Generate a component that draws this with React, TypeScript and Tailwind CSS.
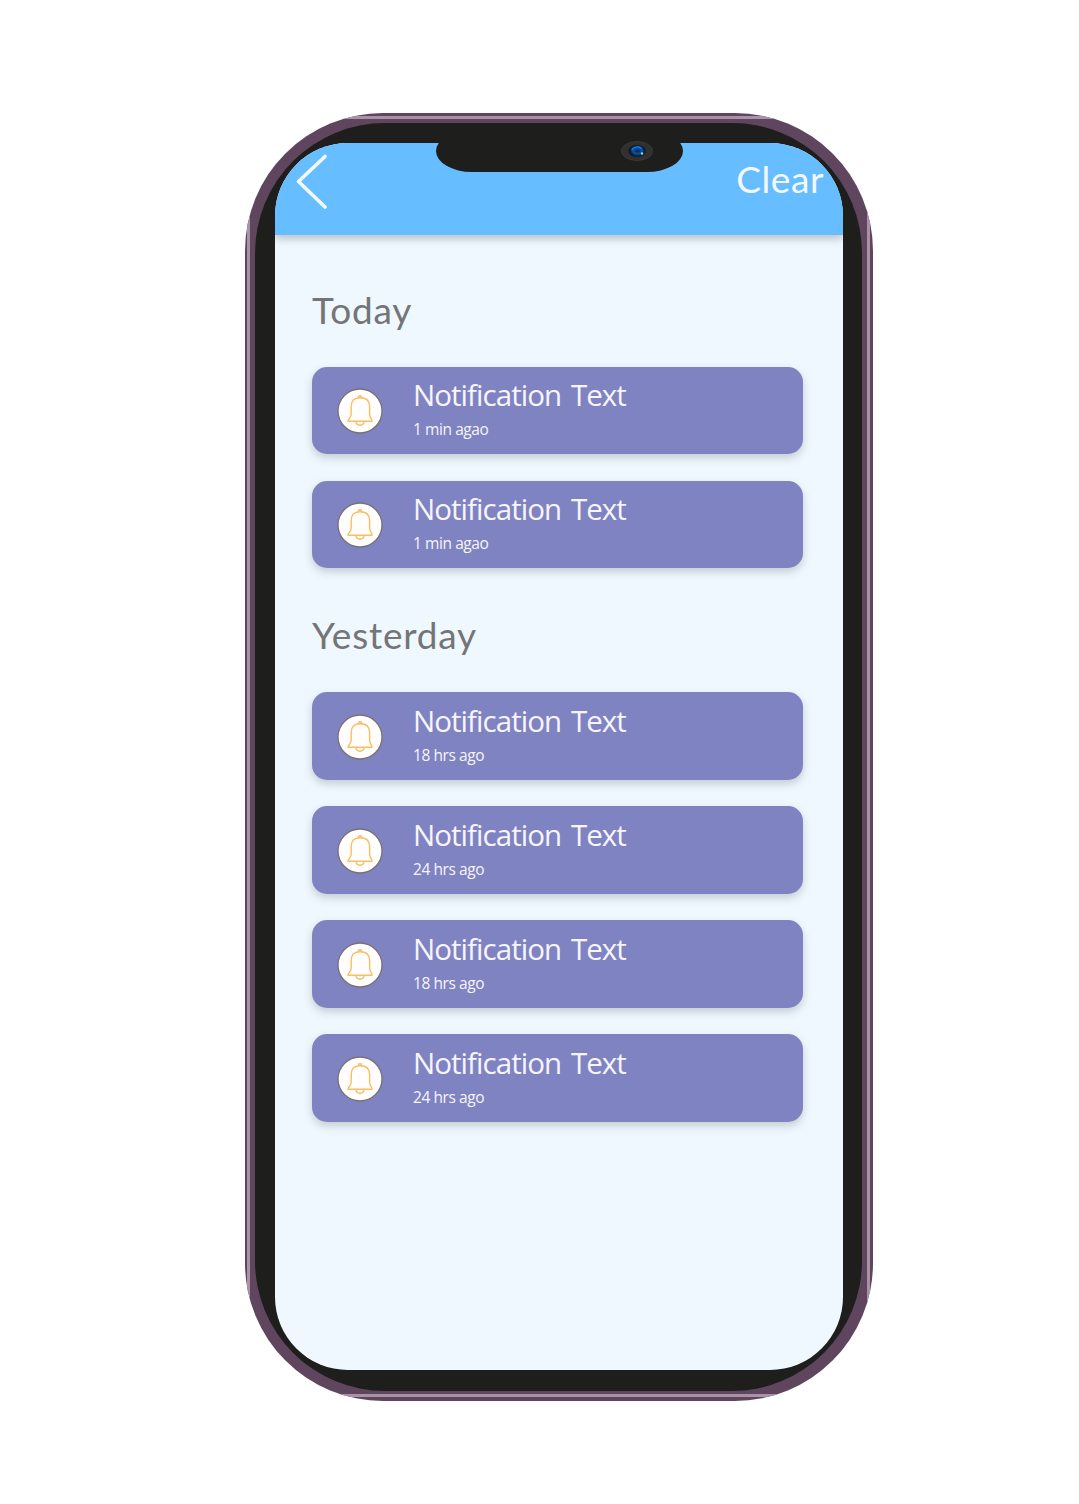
import React from "react";

const today = ["1 min agao", "1 min agao"];
const yesterday = ["18 hrs ago", "24 hrs ago", "18 hrs ago", "24 hrs ago"];

function Bell() {
  return (
    <svg className="mt-[2px] size-[46px] shrink-0" viewBox="0 0 46 46" fill="none">
      <circle cx="23" cy="23" r="22" fill="#fffefc" stroke="#77717b" strokeWidth="1.3" />
      <g stroke="#f9bd62" strokeWidth="1.4" strokeLinejoin="round" strokeLinecap="round">
        <path d="M11 33.2H35C35 30.6 32.6 30 32.6 26V18.5C32.6 13 29 9.8 23 9.8C17 9.8 14.2 13 14.2 18.5V26C14.2 30 11 30.6 11 33.2Z" />
        <path d="M21.3 9.3C21.3 7.2 24.7 7.2 24.7 9.3" />
        <path d="M18.8 33.5C19.4 38.4 26.6 38.4 27.2 33.5" />
      </g>
    </svg>
  );
}

function Card({ time }: { time: string }) {
  return (
    <article className="flex h-[87.5px] w-[491px] items-center rounded-[15px] bg-[#8083c1] pl-[25px] text-[#f6f5fb] shadow-[0_4px_8px_rgba(70,80,90,0.26)]">
      <Bell />
      <div className="-mt-[4px] ml-[30px] flex flex-col whitespace-nowrap font-['Open_Sans','Noto_Sans',sans-serif]">
        <h3 className="text-[29.5px] leading-[38px] tracking-[-0.95px] [word-spacing:3px]">Notification Text</h3>
        <p className="mt-[3px] text-[15.5px] leading-[24px] tracking-[-0.42px]">{time}</p>
      </div>
    </article>
  );
}

function Section({ title, items }: { title: string; items: string[] }) {
  return (
    <section>
      <h2 className="mb-[33px] h-[48px] font-['Lato',sans-serif] text-[37px] leading-[47px] tracking-[0.8px] text-[#747577]">{title}</h2>
      <div className="flex flex-col gap-[26.5px]">
        {items.map((time, i) => (
          <Card key={i} time={time} />
        ))}
      </div>
    </section>
  );
}

export default function App() {
  return (
    <main className="h-[1504px] w-[1079px] overflow-hidden bg-white pl-[244.5px] pt-[113px]">
      <div className="relative h-[1287.5px] w-[628.5px] overflow-hidden rounded-[138px] bg-[#5f465e] px-[10.5px] py-[10px]">
        <div className="absolute inset-x-0 top-[3px] h-[3px] bg-[#a793a5]" />
        <div className="absolute inset-x-0 bottom-[3.5px] h-[3px] bg-[#a793a5]" />
        <div className="absolute inset-y-0 left-[2.5px] w-[3px] bg-[#a793a5]" />
        <div className="absolute inset-y-0 right-[3px] w-[3px] bg-[#a793a5]" />
        <div className="relative h-[1267.5px] w-[607px] rounded-[130px] bg-[#1e1e1c] px-[20px] pt-[20px]">
          <div className="h-[1227px] w-[568px] overflow-hidden rounded-[73px] bg-[#f0f8ff]">
            <header className="flex h-[92px] items-start justify-between bg-[#66bdff] pl-[21px] pr-[19px] pt-[11px] shadow-[0_4px_8px_rgba(70,80,90,0.32)]">
              <svg className="h-[56px] w-[32px]" viewBox="0 0 32 56" fill="none" stroke="#f4f9fd" strokeWidth="3.6" strokeLinecap="round" strokeLinejoin="round">
                <path d="M29 2.5L2.5 27.5L29 53" />
              </svg>
              <button className="mt-px font-['Lato',sans-serif] text-[37px] leading-[48px] tracking-[0.6px] text-[#f4f7fc]">Clear</button>
            </header>
            <div className="flex flex-col gap-[43.3px] pl-[37px] pt-[50.7px]">
              <Section title="Today" items={today} />
              <Section title="Yesterday" items={yesterday} />
            </div>
          </div>
          <div className="absolute left-[181px] top-[7px] h-[42px] w-[247px] rounded-[36px/21px] bg-[#1e1e1c]">
            <svg className="absolute left-[184px] top-[10px] h-[22px] w-[34px]" viewBox="0 0 34 22">
              <defs>
                <radialGradient id="lens">
                  <stop offset="0" stopColor="#082445" />
                  <stop offset="0.6" stopColor="#0b55a5" />
                  <stop offset="1" stopColor="#06172c" />
                </radialGradient>
              </defs>
              <ellipse cx="17" cy="11" rx="15.5" ry="9.5" fill="#303031" stroke="#424242" strokeWidth="0.7" />
              <ellipse cx="17" cy="11" rx="8.8" ry="6" fill="#101a29" />
              <ellipse cx="17.5" cy="11" rx="7.5" ry="5" fill="url(#lens)" />
              <path d="M12 10C13 6.5 19 6 22 8.5" stroke="#1476dc" strokeWidth="1.6" fill="none" />
              <circle cx="22" cy="13.5" r="1.2" fill="#9fcbe8" />
            </svg>
          </div>
        </div>
      </div>
    </main>
  );
}
